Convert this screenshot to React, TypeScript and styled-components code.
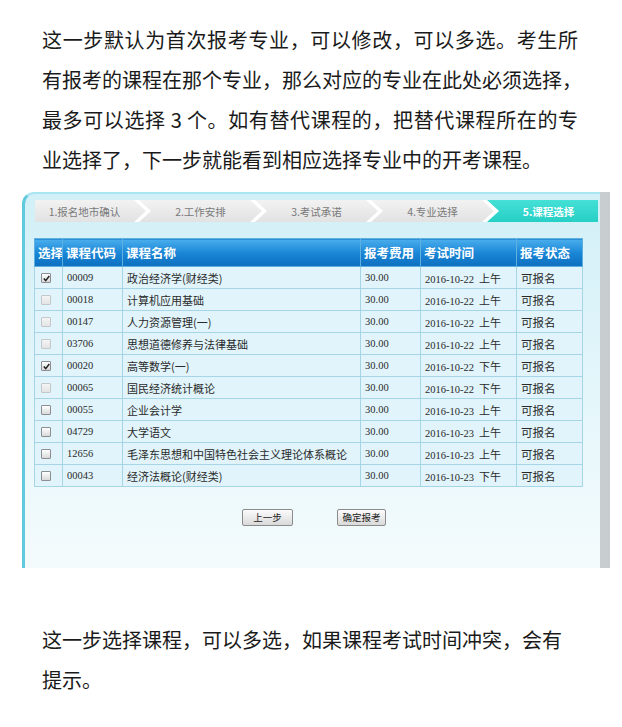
import React from 'react';
import styled, { createGlobalStyle } from 'styled-components';

const GlobalStyle = createGlobalStyle`
  html, body {
    margin: 0;
    padding: 0;
    background: #ffffff;
  }
  body {
    font-family: "Noto Sans CJK SC", "Liberation Sans", sans-serif;
    color: #1a1a1a;
  }
`;

const Page = styled.div`
  width: 622px;
  padding: 20px 0 40px;
`;

const Paragraph = styled.p<{ $top?: number }>`
  margin: ${p => p.$top ?? 0}px 0 0 42px;
  width: 536px;
  font-size: 20px;
  line-height: 40px;
  color: #1a1a1a;
`;

const Line = styled.span<{ $justify?: boolean }>`
  display: block;
  white-space: nowrap;
  text-align: ${p => (p.$justify ? 'justify' : 'left')};
  text-align-last: ${p => (p.$justify ? 'justify' : 'left')};
`;

const Figure = styled.div`
  display: flex;
  width: 588px;
  height: 378px;
  margin: 10px 0 0 22px;
`;

const Panel = styled.div`
  flex: 1;
  min-width: 0;
  display: flex;
  flex-direction: column;
  margin-top: 2px;
  padding: 6px 2px 0 10px;
  border-left: 3px solid #5fc9de;
  border-top: 2px solid #a9e6f1;
  border-top-left-radius: 12px;
  background: linear-gradient(180deg, #d2f0f7 0%, #dcf3f9 30%, #eaf8fb 70%, #f4fbfd 100%);
`;

const Scrollbar = styled.div`
  width: 10px;
  flex-shrink: 0;
  margin-top: 2px;
  background: #c8cdd0;
`;

const StepBar = styled.div`
  display: flex;
  height: 22px;
  background: #ffffff;
`;

const Step = styled.div<{ $first?: boolean; $last?: boolean; $active?: boolean }>`
  flex: 1;
  display: flex;
  align-items: center;
  justify-content: center;
  margin-left: ${p => (p.$first ? 0 : -7)}px;
  padding-left: ${p => (p.$first ? 0 : 12)}px;
  padding-right: ${p => (p.$last ? 0 : 12)}px;
  font-size: 10.5px;
  font-weight: ${p => (p.$active ? 700 : 400)};
  color: ${p => (p.$active ? '#ffffff' : '#7a7a7a')};
  background: ${p =>
    p.$active
      ? 'linear-gradient(180deg, #45e0d6 0%, #26cfc4 100%)'
      : 'linear-gradient(180deg, #f2f2f2 0%, #e2e2e2 100%)'};
  clip-path: ${p => {
    const notch = p.$first ? '0 100%' : '0 100%, 12px 50%';
    const right = p.$last ? '100% 0, 100% 100%' : 'calc(100% - 12px) 0, 100% 50%, calc(100% - 12px) 100%';
    return `polygon(0 0, ${right}, ${notch})`;
  }};
`;

const Table = styled.table`
  width: 548px;
  margin: 16px 0 0 -1px;
  border-collapse: collapse;
  table-layout: fixed;
`;

const HeadCell = styled.th<{ $w: number }>`
  box-sizing: border-box;
  width: ${p => p.$w}px;
  height: 28px;
  padding: 0 3px;
  border: 1px solid #5eb0e0;
  background: linear-gradient(180deg, #4aaeed 0%, #1a86d6 50%, #0d6fc0 100%);
  color: #ffffff;
  font-size: 12.5px;
  font-weight: 700;
  text-align: left;
  white-space: nowrap;
  overflow: hidden;
`;

const Cell = styled.td`
  box-sizing: border-box;
  height: 22px;
  padding: 0 4px;
  border: 1px solid #a5d5e7;
  background: #e1f4fb;
  font-family: "Liberation Serif", "Noto Sans CJK SC", serif;
  font-size: 10.5px;
  color: #2a2a2a;
  white-space: nowrap;
  overflow: hidden;
`;

const NameCell = styled(Cell)`
  font-family: "Noto Sans CJK SC", sans-serif;
  font-size: 11px;
`;

const Half = styled.span`
  font-family: "Noto Sans CJK SC", sans-serif;
  font-size: 11px;
  margin-left: 5px;
`;

const Status = styled(NameCell)`
  font-size: 11.5px;
`;

const Box = styled.span<{ $disabled?: boolean }>`
  display: inline-flex;
  align-items: center;
  justify-content: center;
  width: 8px;
  height: 8px;
  margin-left: 2px;
  border: 1px solid ${p => (p.$disabled ? '#c4c8ca' : '#8c8f92')};
  border-radius: 1px;
  background: ${p =>
    p.$disabled ? 'linear-gradient(180deg, #f4f4f4, #e4e4e4)' : 'linear-gradient(180deg, #ffffff, #d9d9d9)'};
  vertical-align: middle;
`;

const ButtonRow = styled.div`
  display: flex;
  gap: 44px;
  margin: 22px 0 0 207px;
`;

const Button = styled.button<{ $w: number }>`
  width: ${p => p.$w}px;
  height: 17px;
  padding: 0;
  border: 1px solid #8b8b8b;
  border-radius: 2px;
  background: linear-gradient(180deg, #fbfbfb 0%, #e9e9e9 55%, #d9d9d9 100%);
  font-family: "Noto Sans CJK SC", sans-serif;
  font-size: 9.5px;
  line-height: 15px;
  color: #222;
`;

const steps = ['1.报名地市确认', '2.工作安排', '3.考试承诺', '4.专业选择', '5.课程选择'];

const columns: [string, number][] = [
  ['选择', 28],
  ['课程代码', 60],
  ['课程名称', 238],
  ['报考费用', 60],
  ['考试时间', 96],
  ['报考状态', 66],
];

type Course = { code: string; name: string; date: string; half: string; checked?: boolean; disabled?: boolean };

const courses: Course[] = [
  { code: '00009', name: '政治经济学(财经类)', date: '2016-10-22', half: '上午', checked: true },
  { code: '00018', name: '计算机应用基础', date: '2016-10-22', half: '上午', disabled: true },
  { code: '00147', name: '人力资源管理(一)', date: '2016-10-22', half: '上午', disabled: true },
  { code: '03706', name: '思想道德修养与法律基础', date: '2016-10-22', half: '上午', disabled: true },
  { code: '00020', name: '高等数学(一)', date: '2016-10-22', half: '下午', checked: true },
  { code: '00065', name: '国民经济统计概论', date: '2016-10-22', half: '下午', disabled: true },
  { code: '00055', name: '企业会计学', date: '2016-10-23', half: '上午' },
  { code: '04729', name: '大学语文', date: '2016-10-23', half: '上午' },
  { code: '12656', name: '毛泽东思想和中国特色社会主义理论体系概论', date: '2016-10-23', half: '上午' },
  { code: '00043', name: '经济法概论(财经类)', date: '2016-10-23', half: '下午' },
];

const Checkbox: React.FC<{ checked?: boolean; disabled?: boolean }> = ({ checked, disabled }) => (
  <Box $disabled={disabled}>
    {checked && (
      <svg width="7" height="7" viewBox="0 0 7 7">
        <path d="M0.8 3.6 L2.7 5.6 L6.3 1" fill="none" stroke="#222" strokeWidth="1.5" />
      </svg>
    )}
  </Box>
);

const App: React.FC = () => (
  <Page>
    <GlobalStyle />
    <Paragraph>
      <Line $justify>这一步默认为首次报考专业，可以修改，可以多选。考生所</Line>
      <Line $justify>有报考的课程在那个专业，那么对应的专业在此处必须选择，</Line>
      <Line $justify>最多可以选择 3 个。如有替代课程的，把替代课程所在的专</Line>
      <Line>业选择了，下一步就能看到相应选择专业中的开考课程。</Line>
    </Paragraph>

    <Figure>
      <Panel>
        <StepBar>
          {steps.map((s, i) => (
            <Step key={s} $first={i === 0} $last={i === steps.length - 1} $active={i === steps.length - 1}>
              {s}
            </Step>
          ))}
        </StepBar>

        <Table>
          <thead>
            <tr>
              {columns.map(([label, w]) => (
                <HeadCell key={label} $w={w}>
                  {label}
                </HeadCell>
              ))}
            </tr>
          </thead>
          <tbody>
            {courses.map(c => (
              <tr key={c.code}>
                <Cell>
                  <Checkbox checked={c.checked} disabled={c.disabled} />
                </Cell>
                <Cell>{c.code}</Cell>
                <NameCell>{c.name}</NameCell>
                <Cell>30.00</Cell>
                <Cell>
                  {c.date}
                  <Half>{c.half}</Half>
                </Cell>
                <Status>可报名</Status>
              </tr>
            ))}
          </tbody>
        </Table>

        <ButtonRow>
          <Button $w={51}>上一步</Button>
          <Button $w={49}>确定报考</Button>
        </ButtonRow>
      </Panel>
      <Scrollbar />
    </Figure>

    <Paragraph $top={52}>
      <Line>这一步选择课程，可以多选，如果课程考试时间冲突，会有</Line>
      <Line>提示。</Line>
    </Paragraph>
  </Page>
);

export default App;
